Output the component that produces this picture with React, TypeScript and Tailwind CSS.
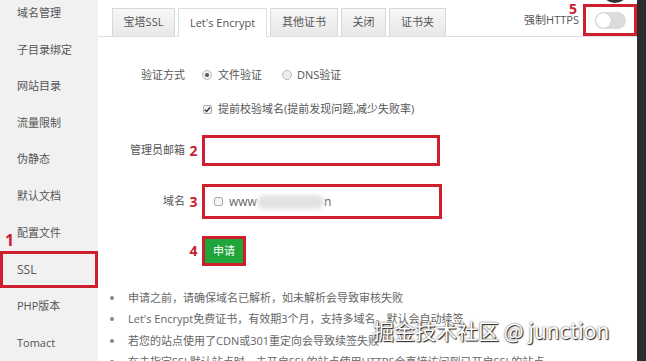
import React from "react";

const menu = ["域名管理", "子目录绑定", "网站目录", "流量限制", "伪静态", "默认文档", "配置文件", "SSL", "PHP版本", "Tomact"];

const tabs = [
  { name: "宝塔SSL", w: "w-[63px]" },
  { name: "Let's Encrypt", w: "w-[89px]", active: true },
  { name: "其他证书", w: "w-[68px]" },
  { name: "关闭", w: "w-[45px]" },
  { name: "证书夹", w: "w-[57px]" },
];

const tips = [
  "申请之前，请确保域名已解析，如未解析会导致审核失败",
  "Let's Encrypt免费证书，有效期3个月，支持多域名。默认会自动续签",
  "若您的站点使用了CDN或301重定向会导致续签失败",
  "在未指定SSL默认站点时，未开启SSL的站点使用HTTPS会直接访问到已开启SSL的站点",
];

function Radio(props: { checked?: boolean }) {
  return (
    <span className="w-[10px] h-[10px] rounded-full border border-[#bbb] bg-[#eee] flex items-center justify-center">
      {props.checked && <span className="w-[4px] h-[4px] rounded-full bg-[#555]" />}
    </span>
  );
}

function Check(props: { checked?: boolean }) {
  return (
    <span className="w-[9px] h-[9px] rounded-[2px] border border-[#aaa] bg-[#f4f4f4] flex items-center justify-center">
      {props.checked && (
        <svg width="7" height="7" viewBox="0 0 8 8" fill="none" stroke="#333" strokeWidth="1.6">
          <path d="M1 4.2l2 2L7 1.5" />
        </svg>
      )}
    </span>
  );
}

function Num(props: { n: string }) {
  return <span className="w-[17px] text-center text-[14px] font-bold text-[#c8202f] leading-none">{props.n}</span>;
}

export default function App() {
  return (
    <div className="relative w-[646px] h-[361px] overflow-hidden flex bg-white font-['Open_Sans','Noto_Sans_CJK_SC',sans-serif] text-[11px] text-[#555]">
      {/* sidebar */}
      <div className="w-[98px] bg-[#f1f1f1] relative">
        <div className="mt-[-5px] flex flex-col">
          {menu.map((m) =>
            m === "SSL" ? (
              <div key={m} className="h-[37px] flex items-center pl-[14px] border-[3px] border-[#cf1f2e] text-[12px]">
                {m}
              </div>
            ) : (
              <div key={m} className="h-[36.6px] flex items-center pl-[17px]">
                {m}
              </div>
            )
          )}
        </div>
        <span className="absolute left-[5px] top-[232px] text-[16px] font-bold text-[#c8202f] leading-none">1</span>
      </div>

      {/* main */}
      <div className="relative flex-1 flex flex-col">
        <div className="absolute left-[503px] top-[-25px] w-[28px] h-[28px] rounded-full bg-[#333]" />

        <div className="h-[38px] border-b border-[#ddd] flex justify-between pl-[14px]">
          <div className="flex items-end gap-[3px]">
            {tabs.map((t) => (
              <div
                key={t.name}
                className={
                  t.active
                    ? `${t.w} h-[29px] mb-[-1px] bg-white border border-b-0 border-[#ddd] flex items-center justify-center`
                    : `${t.w} h-[28px] bg-gradient-to-b from-[#f7f7f7] to-[#e8e8e8] border border-b-0 border-[#d8d8d8] flex items-center justify-center`
                }
              >
                {t.name}
              </div>
            ))}
          </div>
          <div className="relative flex items-center gap-[4px] self-start mt-[4px]">
            <span>强制HTTPS</span>
            <div className="w-[54px] h-[32px] border-[3px] border-[#cf1f2e] flex items-center justify-center">
              <div className="w-[31px] h-[17px] rounded-full bg-[#dcdcdc] flex items-center pl-[1px]">
                <div className="w-[15px] h-[15px] rounded-full bg-white shadow-[0_0_1px_#999]" />
              </div>
            </div>
            <span className="absolute left-[45px] top-[-2px] text-[14px] font-bold text-[#c8202f] leading-none">5</span>
          </div>
        </div>

        {/* form */}
        <div className="flex flex-col">
          <div className="mt-[27px] h-[22px] flex items-center">
            <span className="w-[87px] text-right">验证方式</span>
            <span className="w-[17px]" />
            <Radio checked />
            <span className="ml-[6px]">文件验证</span>
            <span className="ml-[20px]"><Radio /></span>
            <span className="ml-[5px]">DNS验证</span>
          </div>

          <div className="mt-[12px] h-[22px] flex items-center pl-[105px]">
            <Check checked />
            <span className="ml-[6px]">提前校验域名(提前发现问题,减少失败率)</span>
          </div>

          <div className="mt-[15px] h-[31px] flex items-center">
            <span className="w-[87px] text-right">管理员邮箱</span>
            <Num n="2" />
            <div className="w-[238px] h-[31px] border-[3px] border-[#cf1f2e] bg-white" />
          </div>

          <div className="mt-[18px] h-[35px] flex items-center">
            <span className="w-[87px] text-right">域名</span>
            <Num n="3" />
            <div className="w-[240px] h-[35px] border-[3px] border-[#cf1f2e] flex items-center pl-[9px]">
              <Check />
              <span className="ml-[6px] text-[12px] text-[#666]">www</span>
              <span className="w-[67px] h-[14px] rounded-full bg-[#e2e2e2] blur-[2px]" />
              <span className="text-[12px] text-[#666]">n</span>
            </div>
          </div>

          <div className="mt-[17px] h-[30px] flex items-center">
            <span className="w-[87px]" />
            <Num n="4" />
            <div className="w-[44px] h-[30px] border-[3px] border-[#cf1f2e] bg-[#20a53a] text-white flex items-center justify-center">
              申请
            </div>
          </div>

          <ul className="mt-[21px] flex flex-col">
            {tips.map((t) => (
              <li key={t} className="h-[21.5px] flex items-center text-[#666] whitespace-nowrap">
                <span className="w-[4px] h-[4px] rounded-full bg-[#888] ml-[12px] mr-[14px]" />
                {t}
              </li>
            ))}
          </ul>
        </div>
      </div>

      <div className="w-[9px] bg-[#2b2b2b]" />

      <div className="absolute left-[373px] top-[320px] text-[21px] text-white leading-none whitespace-nowrap font-['Noto_Sans_CJK_SC',sans-serif] [text-shadow:1px_1px_1px_#222,0_0_2px_#444]">
        掘金技术社区 @ junction
      </div>
    </div>
  );
}
